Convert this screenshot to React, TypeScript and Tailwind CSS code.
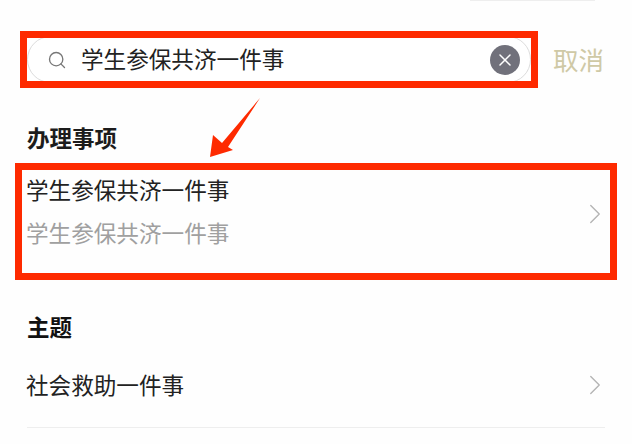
import { Search, X, ChevronRight } from "lucide-react";

const font = { fontFamily: '"Noto Sans CJK SC", sans-serif' };

export default function App() {
  return (
    <main
      style={font}
      className="relative h-[444px] w-[632px] overflow-hidden bg-[#fefefe] text-[#222]"
    >
      <div className="ml-[470px] h-px w-[125px] bg-[#eeeeee]" />

      <div className="mt-[30px] flex items-center pl-[20px]">
        <div className="h-[57px] w-[518px] overflow-hidden border-[7px] border-[#fe2a00] bg-white">
          <div className="-my-[2px] flex h-[47px] items-center rounded-full border border-[#dcdcdc] pl-[19px] pr-[10px]">
            <Search size={20} strokeWidth={1.6} className="text-[#777]" />
            <span className="ml-[14px] text-[22.6px] leading-none">学生参保共济一件事</span>
            <span className="ml-auto flex h-[30px] w-[30px] items-center justify-center rounded-full bg-[#71717b]">
              <X size={20} strokeWidth={1.8} className="text-white" />
            </span>
          </div>
        </div>
        <span className="ml-[15px] -mt-[2px] text-[25.5px] leading-none text-[#cfc9a6]">取消</span>
      </div>

      <h2 className="mt-[34px] pl-[27px] text-[22.5px] font-bold leading-[30px] text-[#1c1c1c]">办理事项</h2>

      <div className="ml-[15px] mt-[11px] flex h-[117px] w-[602px] items-center border-[7px] border-[#fe2a00] pl-[4px]">
        <div className="flex-1 -mt-[21px]">
          <div className="text-[22.6px] leading-[30px]">学生参保共济一件事</div>
          <div className="mt-[13px] text-[22.6px] leading-[30px] text-[#a0a0a0]">学生参保共济一件事</div>
        </div>
        <ChevronRight size={34} strokeWidth={0.95} className="-mr-[2px] -mt-[16px] text-[#b4b4b4]" />
      </div>

      <h2 className="mt-[31px] pl-[27px] text-[22.5px] font-bold leading-[30px] text-[#111]">主题</h2>

      <div className="mx-[27px] mt-[29px] flex h-[58px] items-start border-b border-[#eeeeee]">
        <span className="-ml-px flex-1 text-[22.6px] leading-[30px]">社会救助一件事</span>
        <ChevronRight size={34} strokeWidth={0.95} className="-mr-[7px] -mt-[2px] text-[#b4b4b4]" />
      </div>

      <svg
        className="absolute left-[205px] top-[95px]"
        width="60"
        height="65"
        viewBox="205 95 60 65"
      >
        <polygon points="260,98 228,147 233,150 210,157 213,135 222,143" fill="#fe2a00" />
      </svg>
    </main>
  );
}
